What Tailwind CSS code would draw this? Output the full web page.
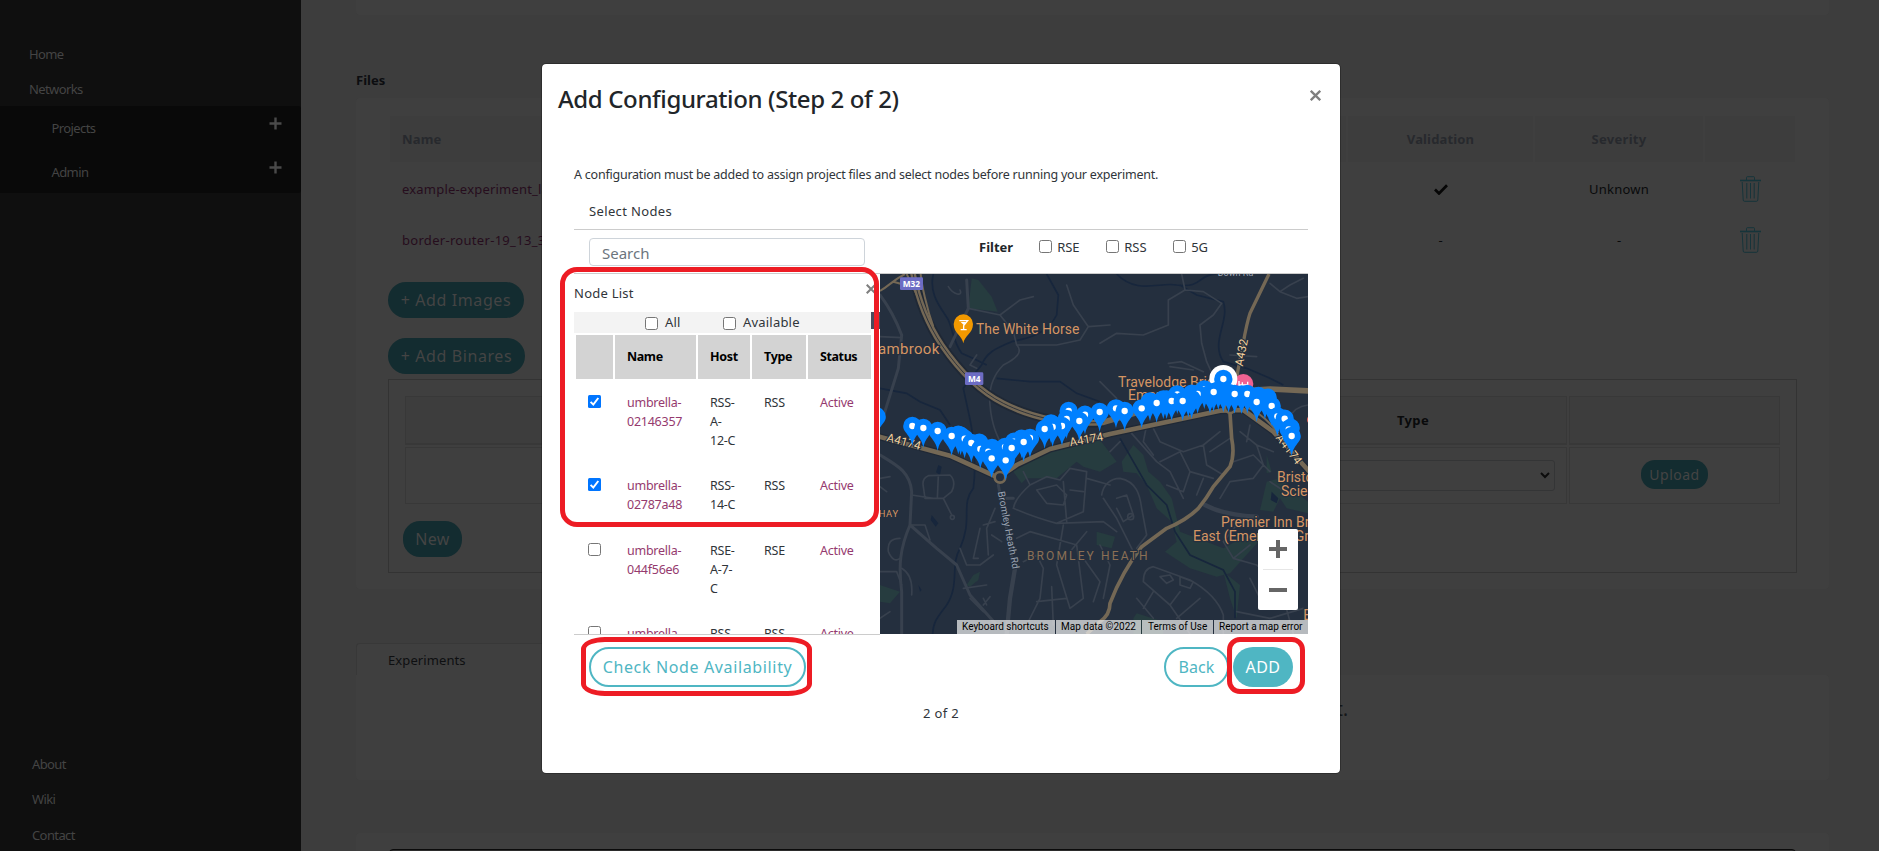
<!DOCTYPE html>
<html lang="en">
<head>
<meta charset="utf-8">
<title>Add Configuration</title>
<script src="https://cdn.jsdelivr.net/npm/@tailwindcss/browser@4"></script>
</head>
<body class="h-[851px] w-[1879px] overflow-hidden bg-[#3d3d3d] font-['Noto_Sans',sans-serif] text-[13px] leading-5">
<div class="flex h-[851px]">

  <!-- Sidebar -->
  <aside class="flex w-[301px] shrink-0 flex-col bg-[#0f0f0f] pt-[44px] tracking-[-0.6px] text-[#444]">
    <a class="ml-[29px]">Home</a>
    <a class="mt-[15px] ml-[29px]">Networks</a>
    <div class="mt-[7px] rounded-r-[3px] bg-[#090909]">
      <div class="flex h-[44px] justify-between pt-3 pr-[19px] pl-[51.500px]">
        <span>Projects</span>
        <svg class="-mt-[1px] size-[13px]" viewBox="0 0 13 13"><path d="M6.5 0.5v12M0.5 6.5h12" stroke="#4a4a4a" stroke-width="2.4"/></svg>
      </div>
      <div class="flex h-[43px] justify-between pt-3 pr-[19px] pl-[51.500px]">
        <span>Admin</span>
        <svg class="-mt-[1px] size-[13px]" viewBox="0 0 13 13"><path d="M6.5 0.5v12M0.5 6.5h12" stroke="#4a4a4a" stroke-width="2.4"/></svg>
      </div>
    </div>
    <div class="mt-auto ml-[32px] flex flex-col">
      <a class="mb-[15px]">About</a>
      <a class="mb-4">Wiki</a>
      <a class="mb-[6px]">Contact</a>
    </div>
  </aside>

  <!-- Page -->
  <main class="flex w-[1528px] shrink-0 flex-col pl-[55px]">
    <div class="h-[15px] shrink-0 rounded-b-[4px] bg-[#3f3f3f]"></div>
    <h2 class="mt-[55px] font-bold text-[#0c0d10]">Files</h2>
    <section class="mt-2 h-[491px] shrink-0 rounded-[4px] bg-[#3f3f3f] pt-[18px] pl-[32px]">
      <div class="ml-[2px] grid w-[1405px] grid-cols-[956px_185px_168px_90px] gap-x-[2px]">
        <div class="flex h-[46px] items-center bg-[#3d3d3d] pl-3 font-bold tracking-[0.15px] text-[#27292d]">Name</div>
        <div class="flex h-[46px] items-center justify-center bg-[#3d3d3d] font-bold tracking-[0.15px] text-[#27292d]">Validation</div>
        <div class="flex h-[46px] items-center justify-center bg-[#3d3d3d] font-bold tracking-[0.3px] text-[#27292d]">Severity</div>
        <div class="h-[46px] bg-[#3d3d3d]"></div>
        <div class="mt-[2px] flex h-[50px] items-center pl-3 tracking-[0.2px] text-[#260d1d]">example-experiment_latest.bin</div>
        <div class="mt-[2px] flex h-[50px] items-center justify-center"><svg class="h-[11px] w-[14px]" viewBox="0 0 14 11"><path d="M1 5.5l4 4 8-8.2" fill="none" stroke="#060606" stroke-width="2.7"/></svg></div>
        <div class="mt-[2px] flex h-[50px] items-center justify-center tracking-[0.2px] text-[#090a0b]">Unknown</div>
        <div class="mt-[2px] flex h-[50px] items-center justify-center">
          <svg class="h-[26px] w-[21px]" viewBox="0 0 21 26" fill="none" stroke="#16343a"><path d="M0 4.5h21" stroke-width="1.6"/><path d="M6.500 4V1.500Q6.500.7 7.500.7h6q1 0 1 .8V4M2.200 6l1 18q.1 1.300 1.300 1.300h12q1.200 0 1.300-1.300l1-18M6.800 7v15.500M10.500 7v15.500M14.200 7v15.500"/></svg>
        </div>
        <div class="flex h-[52px] items-center pl-3 tracking-[0.3px] text-[#260d1d]">border-router-19_13_3.bin</div>
        <div class="flex h-[52px] items-center justify-center text-[#090a0b]">-</div>
        <div class="flex h-[52px] items-center justify-center text-[#090a0b]">-</div>
        <div class="flex h-[52px] items-center justify-center">
          <svg class="h-[26px] w-[21px]" viewBox="0 0 21 26" fill="none" stroke="#16343a"><path d="M0 4.5h21" stroke-width="1.6"/><path d="M6.500 4V1.500Q6.500.7 7.500.7h6q1 0 1 .8V4M2.200 6l1 18q.1 1.300 1.300 1.300h12q1.200 0 1.300-1.300l1-18M6.800 7v15.500M10.500 7v15.500M14.200 7v15.500"/></svg>
        </div>
      </div>
      <button class="mt-4 flex h-[36px] w-[136px] items-center justify-center rounded-[18px] bg-[#132c30] text-base tracking-[0.6px] text-[#444]">+ Add Images</button>
      <button class="mt-5 flex h-[36px] w-[137px] items-center justify-center rounded-[18px] bg-[#132c30] text-base tracking-[0.6px] text-[#444]">+ Add Binares</button>
      <div class="mt-[5px] h-[194px] w-[1409px] border border-[#333] pt-4 pl-4">
        <div class="grid w-[1375px] grid-cols-[852px_308px_211px] gap-x-[2px]">
          <div class="h-[49px] border border-b-2 border-[#383838] bg-[#3d3d3d]"></div>
          <div class="flex h-[49px] items-center justify-center border border-b-2 border-[#383838] bg-[#3d3d3d] font-bold tracking-[0.4px] text-[#090a0b]">Type</div>
          <div class="h-[49px] border border-b-2 border-[#383838] bg-[#3d3d3d]"></div>
          <div class="mt-[2px] h-[57px] border border-[#383838]"></div>
          <div class="mt-[2px] flex h-[57px] justify-center border border-[#383838] pt-3">
            <div class="flex h-[31px] w-[284px] items-center justify-end rounded-[3px] border border-[#343536] pr-[4px]"><svg class="h-[7px] w-[10px]" viewBox="0 0 10 7"><path d="M1 1l4 4 4-4" fill="none" stroke="#0c0c0c" stroke-width="2"/></svg></div>
          </div>
          <div class="mt-[2px] flex h-[57px] justify-center border border-[#383838] pt-3"><button class="flex h-[29px] w-[67px] items-center justify-center rounded-[14px] bg-[#132c30] text-[14px] tracking-[0.5px] text-[#444]">Upload</button></div>
        </div>
        <button class="mt-[17px] -ml-[2px] flex h-[36px] w-[59px] items-center justify-center rounded-[17px] bg-[#132c30] text-base tracking-[0.3px] text-[#444]">New</button>
      </div>
    </section>
    <div class="mt-[54px] h-[32px] w-[300px] shrink-0 rounded-tl-[4px] border-t border-l border-[#383838] bg-[#3f3f3f] pt-[6px] pl-[31px] tracking-[0.1px] text-[#0e0f11]">Experiments</div>
    <section class="h-[105px] shrink-0 rounded-[4px] rounded-tl-none bg-[#3f3f3f] pt-[20px] pr-[481px] text-right text-[19px] leading-7 text-[#15171a]">There are no experiments in this project.</section>
    <section class="mt-[53px] h-[40px] shrink-0 rounded-t-[4px] bg-[#3f3f3f] pt-4 pl-[33px]"><div class="h-[30px] w-[1407px] rounded-t-[4px] border border-[#0b0b0b] bg-[#2b2b2b]"></div></section>
  </main>
</div>

<!-- Dialog -->
<div class="absolute inset-0 flex items-start justify-center pt-16 pl-[3px]">
  <div class="relative h-[709px] w-[798px] shrink-0 rounded-[4px] bg-white text-[#30353a] outline outline-black/25">
    <div class="flex items-start justify-between pt-[19px] pr-[19px] pl-4">
      <h1 class="text-2xl leading-8 font-medium tracking-[-0.37px] text-[#212529]">Add Configuration (Step 2 of 2)</h1>
      <svg class="mt-[6.500px] size-[11px]" viewBox="0 0 11 11"><path d="M.8.8l9.400 9.400M10.200.8L.8 10.200" stroke="#7f7f7f" stroke-width="2.300"/></svg>
    </div>
    <div class="px-8">
      <p class="mt-[50px] text-[12.5px] tracking-[-0.23px] whitespace-nowrap">A configuration must be added to assign project files and select nodes before running your experiment.</p>
      <div class="mt-4 h-[29px] border-b border-[#ccc] pl-[15px] tracking-[0.36px]">Select Nodes</div>
      <div class="flex h-[44px] border-b border-[#ccc] pt-2 pl-[15px]">
        <div class="flex h-[28px] w-[276px] items-center rounded-[4px] border border-[#ced4da] pt-px pl-3 text-[15px] tracking-[0px] text-[#6c757d]">Search</div>
        <span class="ml-[114px] -mt-px font-bold text-[#212529]">Filter</span>
        <span class="mt-[2px] ml-[26px] size-[13px] rounded-[2.500px] border border-[#767676]"></span><span class="-mt-px ml-[5px] w-[49px]">RSE</span>
        <span class="mt-[2px] size-[13px] rounded-[2.500px] border border-[#767676]"></span><span class="-mt-px ml-[5px] w-[49px] tracking-[0.1px]">RSS</span>
        <span class="mt-[2px] size-[13px] rounded-[2.500px] border border-[#767676]"></span><span class="-mt-px ml-[5px] tracking-[-0.1px]">5G</span>
      </div>
      <div class="flex">
        <!-- Node list -->
        <div class="h-[361px] w-[306px] overflow-hidden border-b border-[#ccc]">
          <div class="flex h-[38px] justify-between pt-[9px] pr-[4px] tracking-[0.25px]">Node List
            <svg class="mt-[1px] size-[10px]" viewBox="0 0 11 11"><path d="M.8.8l9.400 9.400M10.200.8L.8 10.200" stroke="#7f7f7f" stroke-width="2.300"/></svg>
          </div>
          <div class="flex h-[21px]">
            <div class="flex w-[297px] bg-[#f3f3f3] pl-[71px] tracking-[0.2px]">
              <span class="mt-[5px] size-[13px] rounded-[2.500px] border border-[#767676] bg-white"></span><span class="ml-[7px] w-[58px]">All</span>
              <span class="mt-[5px] size-[13px] rounded-[2.500px] border border-[#767676] bg-white"></span><span class="ml-[7px]">Available</span>
            </div>
            <div class="h-[17px] w-[9px] bg-[#484b5c]"></div>
          </div>
          <div class="mt-[2px] ml-[2px] grid w-[295px] grid-cols-[37px_81px_52px_54px_63px] gap-x-[2px] text-[12.5px] leading-[19px] tracking-[-0.25px]">
            <div class="h-[46px] border-b-2 border-white bg-[#d3d3d3]"></div>
            <div class="h-[46px] border-b-2 border-white bg-[#d3d3d3] pt-3 pl-3 font-bold tracking-[-0.4px] text-black">Name</div>
            <div class="h-[46px] border-b-2 border-white bg-[#d3d3d3] pt-3 pl-3 font-bold tracking-[-0.3px] text-black">Host</div>
            <div class="h-[46px] border-b-2 border-white bg-[#d3d3d3] pt-3 pl-3 font-bold tracking-[-0.3px] text-black">Type</div>
            <div class="h-[46px] border-b-2 border-white bg-[#d3d3d3] pt-3 pl-3 font-bold tracking-[-0.4px] text-black">Status</div>

            <div class="h-[83px] pt-[14px] pl-3"><svg class="size-[13px]" viewBox="0 0 13 13"><rect width="13" height="13" rx="1.500" fill="#0075ff"/><path d="M2.600 6.900l2.700 2.700 5-6.600" fill="none" stroke="#fff" stroke-width="2"/></svg></div>
            <div class="pt-3 pl-3 text-[#953a6e]">umbrella-<br>02146357</div><div class="pt-3 pl-3">RSS-<br>A-<br>12-C</div><div class="pt-3 pl-3">RSS</div><div class="pt-3 pl-3 text-[#953a6e]">Active</div>

            <div class="h-[65px] pt-[14px] pl-3"><svg class="size-[13px]" viewBox="0 0 13 13"><rect width="13" height="13" rx="1.500" fill="#0075ff"/><path d="M2.600 6.900l2.700 2.700 5-6.600" fill="none" stroke="#fff" stroke-width="2"/></svg></div>
            <div class="pt-3 pl-3 text-[#953a6e]">umbrella-<br>02787a48</div><div class="pt-3 pl-3">RSS-<br>14-C</div><div class="pt-3 pl-3">RSS</div><div class="pt-3 pl-3 text-[#953a6e]">Active</div>

            <div class="h-[83px] pt-[14px] pl-3"><div class="size-[13px] rounded-[2.500px] border border-[#767676]"></div></div>
            <div class="pt-3 pl-3 text-[#953a6e]">umbrella-<br>044f56e6</div><div class="pt-3 pl-3">RSE-<br>A-7-<br>C</div><div class="pt-3 pl-3">RSE</div><div class="pt-3 pl-3 text-[#953a6e]">Active</div>

            <div class="h-[83px] pt-[14px] pl-3"><div class="size-[13px] rounded-[2.500px] border border-[#767676]"></div></div>
            <div class="pt-3 pl-3 text-[#953a6e]">umbrella-</div><div class="pt-3 pl-3">RSS-</div><div class="pt-3 pl-3">RSS</div><div class="pt-3 pl-3 text-[#953a6e]">Active</div>
          </div>
        </div>

        <!-- Map -->
        <div class="relative h-[360px] w-[428px] overflow-hidden bg-[#242f3e]">
          <svg class="block h-[360px] w-[428px]" viewBox="30 27 1284 1080" font-family="Roboto, sans-serif">
            <defs>
              <path id="body" d="M0 59C-4 38-12 30-20 19C-25 12-27.500 7-27.500 0A27.500 27.500 0 0 1 27.500 0C27.500 7 25 12 20 19C12 30 4 38 0 59Z" fill="#0080ff"/>
              <g id="pin"><use href="#body"/><circle r="9.500" fill="#fff"/></g>
            </defs>
            <rect x="30" y="27" width="1284" height="1080" fill="#242f3e"/>
            <!-- parks -->
            <g fill="#263c3f">
              <path d="M305 40L325 45L365 95L383 140L295 130Z"/>
              <path d="M430 620L480 590L560 545L690 525L740 590L690 620L640 605L620 590L560 640L470 640L455 655Z"/>
              <path d="M755 590L790 540L820 570L835 620L870 650L905 700L920 760L930 800L1060 850L1150 800L1165 830L1080 925L1040 935L960 910L885 860L920 830L905 770L860 730L830 660L800 625L760 620Z"/>
              <path d="M1190 650L1230 640L1314 710V745L1250 730L1230 700L1210 740L1170 735Z"/>
              <path d="M680 800L735 815L725 850L680 840ZM30 960L90 980L60 1015L30 1010ZM290 960L310 930L330 920L325 945L300 965ZM1060 920L1110 960L1100 1060L1080 1000ZM790 1060L800 1045L880 1070V1107H790ZM1190 570L1205 620L1190 625Z"/>
            </g>
            <!-- water -->
            <g fill="none" stroke="#17263c" stroke-width="5">
              <path d="M190 27C175 90 215 130 235 165C250 200 250 230 275 265C310 280 330 290 350 300M530 27L565 90L560 150C530 210 470 220 425 230C380 250 350 260 335 300C310 330 300 340 280 370L295 440C310 500 320 600 310 670C270 720 310 760 270 850C240 900 270 960 230 1020C200 1060 190 1070 188 1107"/>
              <path d="M30 370L110 385L150 410L210 435L240 480M380 340L480 350L570 350L620 385L690 410"/>
              <path d="M740 27C800 90 870 50 920 60C1000 70 980 30 1040 27M930 60L980 90L1060 110C1080 170 1020 230 1060 290L1130 310L1200 340L1240 360M750 520L790 590L830 660L890 720L915 800L960 870L1060 915L1095 980V1060"/>
            </g>
            <g fill="#17263c"><path d="M205 600l10 5-5 25-12-8zM185 750l20 25-8 10-15-20zM145 960l10 15-5 5zM1205 680l20 20-5 15-18-10z"/></g>
            <!-- local roads -->
            <g fill="none" stroke="#38414e" stroke-linecap="round" stroke-linejoin="round">
              <g stroke-width="9"><path d="M30 90C60 130 80 170 95 210L85 310L40 455M290 45L295 130L240 245M30 570C80 600 120 620 125 680L120 780C90 850 85 900 95 980V1107M120 780L200 850L260 900L300 990L380 1080M430 700H390M385 660L430 900"/><path d="M1005 720Q1060 750 1160 755M435 910L420 1000L410 1107" stroke-width="13"/></g>
              <g stroke-width="5">
                <path d="M720 180L655 185L630 225L560 240H500L440 240C460 260 440 280 400 300C370 330 355 370 360 420C365 480 380 510 400 550M295 130L390 150L450 105L490 95M390 150L430 200L440 240M655 185L610 120L590 60M30 215L95 218M320 270L300 300L320 310M235 65C250 90 280 95 270 75"/>
                <path d="M690 235L740 205L820 210L895 180V105L945 75L935 27M945 75L1000 80L1055 115L1030 150L990 180L995 235L1010 290L1035 345M895 295L935 290L1000 320M900 305L970 315M690 350L740 400M1080 270L1160 275M1200 55L1230 80L1260 60L1300 40M1230 80L1280 100L1314 95"/>
                <path d="M160 665Q155 640 175 632L240 630Q260 650 245 680L220 700H165ZM205 632L202 700M220 700L245 750M30 640L60 635M30 665L50 680M90 820Q50 820 55 860Q70 895 90 880M125 690L190 700M120 780L165 780L180 825M30 920L80 920L95 960M95 910Q130 930 125 990M30 1060L60 1040"/>
                <path d="M430 730Q435 700 480 660L530 635L570 645L600 610L650 620L640 740L560 775Q500 760 430 730ZM500 675L560 660L590 690L580 720L530 715ZM580 650L590 770M640 680L600 675M650 640L720 660M560 775L700 770L740 800M480 660L460 620"/>
                <path d="M375 730L350 790L355 870M375 770L340 780M330 790L310 880L325 880M365 810L395 830M270 850L290 900L330 900L370 870M280 970L350 960M300 1000L340 1040M340 1000L350 1020M360 995L340 1020M460 890L500 870L520 910L510 1000L470 1080M440 820L480 800L620 840L640 1000L600 1030L560 900L580 780M545 965L550 1080M500 1010L590 1000M640 880L690 950L670 1010M600 860L650 800"/>
                <path d="M695 690C700 660 720 640 750 640C800 650 810 690 815 730L830 810L800 850M740 700L770 690L790 750L760 770L740 730M700 700L740 760L790 860M690 840L720 900L700 1000"/><circle cx="782" cy="755" r="9"/><circle cx="247" cy="757" r="6"/>
                <path d="M780 500L860 590L900 620L940 700M750 530L720 560M850 490L870 530L940 560L1000 540L1050 500M870 590L930 560L960 620L1030 640M960 620L940 680L890 660M830 480L820 530L850 570M1000 540L1010 600L1060 630M1080 520L1020 560M1000 640L980 690M1090 590L1150 570L1200 620M1110 500L1160 540L1180 600L1150 640L1080 650L1050 700M1140 480L1130 530M1160 540L1210 560M1200 650L1260 690L1300 680"/>
                <path d="M820 950Q820 910 850 905L960 945Q1040 990 1060 1050V1107M870 935L900 930L910 945L890 955ZM930 935L970 950L960 970L930 960ZM820 950L900 1020L960 1107M850 980L820 1030M900 1020L930 980M990 1000L920 1060M800 1000L850 1060M1100 780L1060 830L1090 880L1160 900L1230 960L1270 1107M1140 940L1170 1000L1230 1020M1090 880L1140 840M1100 1040L1200 1060L1300 1030M1260 560Q1230 430 1314 420"/>
              </g>
            </g>
            <!-- highways -->
            <g fill="none" stroke-linejoin="round">
              <g stroke="#1f2835">
                <path d="M128 20C145 110 175 180 215 240C270 320 330 380 400 415C480 455 580 480 700 472" stroke-width="28"/>
                <path d="M20 513L240 572L385 638L440 600L540 552L720 507L1050 437L1120 435L1210 500L1320 622" stroke-width="21"/>
              </g>
              <g stroke="#746855">
                <path d="M128 20C145 110 175 180 215 240C270 320 330 380 400 415C480 455 580 480 700 472L1000 385L1200 372L1320 378" stroke-width="17"/>
                <path d="M110 27L175 160M152 27C155 60 170 130 190 185M30 78C60 60 70 45 105 27M70 50L105 60" stroke-width="6"/>
                <path d="M20 513L240 572L385 638L440 600L540 552L720 507L1050 437L1120 435L1210 500L1320 622" stroke-width="14"/>
                <path d="M1125 425Q1180 445 1225 505" stroke-width="6"/>
                <path d="M1197 27L1140 145C1125 190 1120 240 1105 310L1090 400" stroke-width="10"/>
                <path d="M1080 445L1085 520Q1095 570 1080 605L1030 665Q1010 700 985 730Q950 765 890 790L815 845C780 890 745 950 720 1015Q720 1050 690 1070L650 1107" stroke-width="11"/>
                <circle cx="390" cy="637" r="16" stroke-width="8" fill="#242f3e"/><circle cx="1081" cy="428" r="16" stroke-width="7" fill="#242f3e"/>
              </g>
              <path d="M128 20C145 110 175 180 215 240C270 320 330 380 400 415C480 455 580 480 700 472" stroke="#1f2835" stroke-width="2.500"/>
            </g>
            <!-- labels -->
            <g stroke="#242f3e" stroke-width="7" paint-order="stroke" stroke-linejoin="round" fill="#d59563">
              <text x="318" y="207" font-size="42" textLength="310">The White Horse</text>
              <text x="24" y="267" font-size="45" textLength="184">ambrook</text>
              <text x="744" y="366" font-size="42">Travelodge Bristol</text>
              <text x="774" y="406" font-size="42">Emersons Green</text>
              <text x="1221" y="652" font-size="42">Bristol &amp; Bath</text>
              <text x="1233" y="694" font-size="42">Science Park</text>
              <text x="1053" y="787" font-size="42">Premier Inn Bristol</text>
              <text x="969" y="829" font-size="42">East (Emersons Green)</text>
              <text x="26" y="757" font-size="28" textLength="58">HAY</text>
              <text x="1300" y="1066" font-size="42">E</text>
              <text x="471" y="886" font-size="36" textLength="362" fill="#8a6f55">BROMLEY HEATH</text>
              <text transform="translate(383 681) rotate(79)" font-size="30" textLength="236" fill="#9ca5b3">Bromley Heath Rd</text>
              <text x="1043" y="33" font-size="27" fill="#9ca5b3">Down Rd</text>
              <g fill="#f3d19c" font-size="35">
                <text transform="translate(48 528) rotate(15)" textLength="104">A4174</text>
                <text transform="translate(601 544) rotate(-10)" textLength="102">A4174</text>
                <text transform="translate(1118 305) rotate(-79)" textLength="82">A432</text>
                <text transform="translate(1216 518) rotate(53)" textLength="104">A4174</text>
              </g>
            </g>
            <g font-family="'Open Sans', sans-serif" font-weight="700" font-size="25" fill="#fff" text-anchor="middle">
              <rect x="90" y="37" width="69" height="38" rx="4" fill="#6c6cc4"/><text x="124" y="65">M32</text>
              <rect x="285" y="322" width="55" height="38" rx="4" fill="#6c6cc4"/><text x="313" y="350">M4</text>
            </g>
            <path d="M280 235C277 212 251 205 251 177A29 29 0 0 1 309 177C309 205 283 212 280 235Z" fill="#f29900"/>
            <path d="M268 167H293L281 182V193M272 194H290" fill="none" stroke="#fff" stroke-width="4"/><path d="M272 171h17l-8 9z" fill="#fff"/>
            <circle cx="1120" cy="357" r="30" fill="#f06292"/><path d="M1107 348v16h26v-14M1107 360h26M1117 352v8" stroke="#fff" stroke-width="4" fill="none"/>
            <circle cx="1326" cy="464" r="15" fill="#e8625a"/>
            <circle cx="1060" cy="342" r="42" fill="#fff"/>
            <!-- node pins -->
            <g>
              <use href="#pin" x="1060" y="342"/><use href="#pin" x="1003" y="373"/><use href="#body" x="1045" y="376"/><use href="#pin" x="922" y="388"/><use href="#body" x="1020" y="386"/><use href="#body" x="965" y="386"/>
              <use href="#body" x="1060" y="383"/><use href="#body" x="1076" y="384"/><use href="#body" x="1115" y="388"/><use href="#pin" x="1094" y="387"/><use href="#pin" x="983" y="387"/><use href="#pin" x="1031" y="381"/><use href="#pin" x="1132" y="387"/>
              <use href="#body" x="1165" y="393"/><use href="#pin" x="1193" y="398"/><use href="#body" x="1185" y="404"/><use href="#body" x="890" y="403"/><use href="#body" x="955" y="398"/><use href="#body" x="965" y="402"/><use href="#body" x="880" y="403"/><use href="#pin" x="905" y="408"/><use href="#pin" x="938" y="408"/>
              <use href="#body" x="840" y="409"/><use href="#pin" x="1160" y="411"/><use href="#pin" x="860" y="414"/><use href="#pin" x="1205" y="423"/><use href="#pin" x="738" y="430"/><use href="#pin" x="815" y="430"/>
              <use href="#pin" x="596" y="438"/><use href="#pin" x="764" y="438"/><use href="#pin" x="689" y="441"/><use href="#pin" x="645" y="449"/><use href="#pin" x="1222" y="454"/><use href="#pin" x="1244" y="461"/><use href="#pin" x="20" y="455"/>
              <use href="#pin" x="590" y="462"/><use href="#pin" x="628" y="468"/><use href="#body" x="543" y="475"/><use href="#pin" x="576" y="483"/><use href="#pin" x="127" y="483"/><use href="#pin" x="548" y="486"/><use href="#pin" x="160" y="489"/><use href="#pin" x="524" y="492"/><use href="#body" x="1262" y="488"/><use href="#pin" x="1256" y="493"/><use href="#pin" x="203" y="498"/>
              <use href="#body" x="265" y="509"/><use href="#body" x="272" y="512"/><use href="#pin" x="1265" y="513"/><use href="#pin" x="480" y="519"/><use href="#pin" x="284" y="521"/><use href="#pin" x="245" y="513"/><use href="#body" x="455" y="521"/><use href="#pin" x="432" y="530"/><use href="#pin" x="461" y="531"/><use href="#body" x="328" y="533"/><use href="#pin" x="304" y="534"/>
              <use href="#pin" x="405" y="546"/><use href="#body" x="366" y="549"/><use href="#pin" x="425" y="549"/><use href="#pin" x="331" y="552"/><use href="#pin" x="355" y="560"/><use href="#pin" x="365" y="580"/><use href="#pin" x="407" y="586"/>
            </g>
          </svg>
          <div class="absolute right-[10px] bottom-6 flex h-[81px] w-10 flex-col items-center rounded-[2px] bg-white">
            <svg class="h-[81px] w-10" viewBox="0 0 40 81"><path d="M11 20h18M20 11v18M11 61h18" stroke="#666" stroke-width="4"/><path d="M5 40.500h30" stroke="#e6e6e6"/></svg>
          </div>
          <div class="absolute right-0 bottom-0 flex h-[14px] gap-px font-[Roboto] text-[10px] leading-[14px] whitespace-nowrap text-black">
            <span class="w-[98px] bg-[#f5f5f5]/70 pl-[5px]">Keyboard shortcuts</span><span class="w-[85px] bg-[#f5f5f5]/70 pl-[5px]">Map data ©2022</span><span class="w-[71px] bg-[#f5f5f5]/70 pl-[6px]">Terms of Use</span><span class="w-[94px] bg-[#f5f5f5]/70 pl-[5px]">Report a map error</span>
          </div>
        </div>
      </div>
      <div class="mt-3 flex pr-[15px] pl-[15px] text-base">
        <button class="flex h-10 w-[217px] items-center justify-center rounded-[20px] border-2 border-[#4fb6c3] tracking-[0.64px] whitespace-nowrap text-[#4fb6c3]">Check Node Availability</button>
        <button class="ml-auto flex h-10 w-[65px] items-center justify-center rounded-[20px] border-2 border-[#4fb6c3] tracking-[0.1px] text-[#4fb6c3]">Back</button>
        <button class="ml-1 flex h-10 w-[60px] items-center justify-center rounded-[20px] bg-[#4fb6c3] tracking-[0.4px] text-white">ADD</button>
      </div>
      <p class="mt-[16px] text-center tracking-[0.36px]">2 of 2</p>
    </div>

    <!-- Highlight outlines -->
    <div class="absolute top-[203px] left-[18px] h-[260px] w-[319px] rounded-[17px] border-5 border-[#ed1c24]"></div>
    <div class="absolute top-[573px] left-[39px] h-[59px] w-[231px] rounded-[24px/12px] border-5 border-[#ed1c24]"></div>
    <div class="absolute top-[573px] left-[685px] h-[57px] w-[78px] rounded-[13px] border-5 border-[#ed1c24]"></div>
  </div>
</div>
</body>
</html>
